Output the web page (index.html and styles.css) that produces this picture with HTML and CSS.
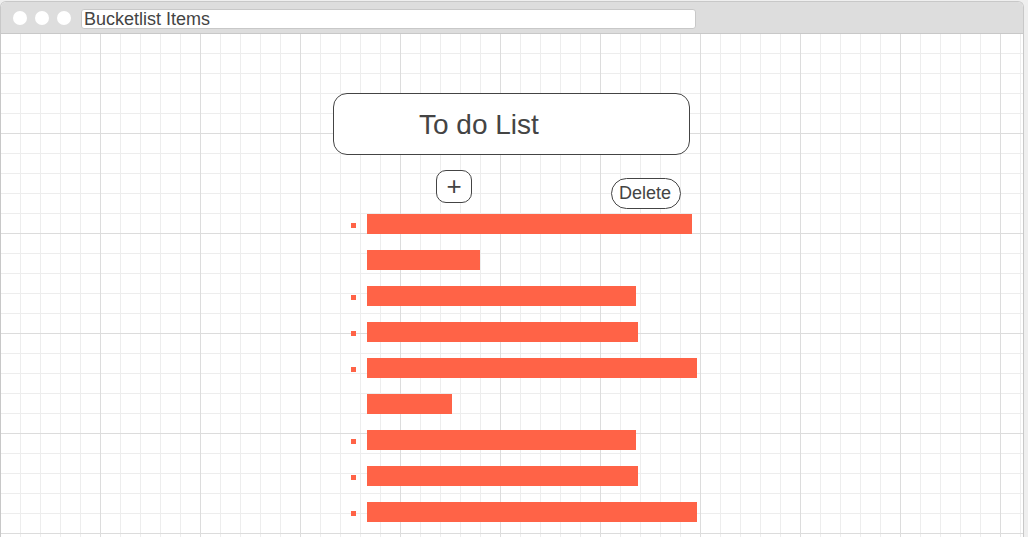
FILE: index.html
```html
<!DOCTYPE html>
<html>
<head>
<meta charset="utf-8">
<title>Bucketlist Items</title>
<link rel="stylesheet" href="styles.css">
</head>
<body>
<div class="window">
  <div class="titlebar">
    <span class="dot"></span>
    <span class="dot"></span>
    <span class="dot"></span>
    <div class="address">Bucketlist Items</div>
  </div>
  <div class="content">
    <div class="column">
      <div class="todo-title">To do List</div>
      <div class="actions">
        <button class="add-btn">+</button>
        <button class="delete-btn">Delete</button>
      </div>
      <ul class="items">
        <li class="item"><span class="bar" style="width:325px"></span></li>
        <li class="item nobullet"><span class="bar" style="width:113px"></span></li>
        <li class="item"><span class="bar" style="width:269px"></span></li>
        <li class="item"><span class="bar" style="width:271px"></span></li>
        <li class="item"><span class="bar" style="width:330px"></span></li>
        <li class="item nobullet"><span class="bar" style="width:85px"></span></li>
        <li class="item"><span class="bar" style="width:269px"></span></li>
        <li class="item"><span class="bar" style="width:271px"></span></li>
        <li class="item"><span class="bar" style="width:330px"></span></li>
      </ul>
    </div>
  </div>
</div>
</body>
</html>
```

FILE: styles.css
```css
html, body {
  margin: 0;
  padding: 0;
}
body {
  background: #efefef;
  font-family: "Liberation Sans", Arial, sans-serif;
  color: #444;
  overflow: hidden;
}
.window {
  box-sizing: border-box;
  width: 1024px;
  height: 536px;
  margin-top: 1px;
  border: 1px solid #c8c8c8;
  border-bottom: none;
  border-radius: 6px 6px 0 0;
  overflow: hidden;
  background: #fff;
  display: flex;
  flex-direction: column;
}
.titlebar {
  height: 31px;
  flex: none;
  background: #dddddd;
  border-bottom: 1px solid #c8c8c8;
  display: flex;
  align-items: center;
  padding-left: 12px;
}
.dot {
  width: 14px;
  height: 14px;
  border-radius: 50%;
  background: #fff;
  margin-right: 8px;
  flex: none;
}
.dot:nth-child(3) {
  margin-right: 10px;
}
.address {
  box-sizing: border-box;
  width: 615px;
  height: 20px;
  background: #fff;
  border: 1px solid #c8c8c8;
  border-radius: 3px;
  font-size: 18px;
  line-height: 18px;
  padding-left: 2px;
  color: #444;
  margin-top: 2px;
}
.content {
  flex: 1;
  background-color: #fff;
  background-image:
    linear-gradient(to right, #dcdcdc 1px, transparent 1px),
    linear-gradient(to bottom, #dcdcdc 1px, transparent 1px),
    linear-gradient(to right, #ededed 1px, transparent 1px),
    linear-gradient(to bottom, #ededed 1px, transparent 1px);
  background-size: 100px 100px, 100px 100px, 20px 20px, 20px 20px;
  background-position: -1px -1px, -1px -1px, -1px -1px, -1px -1px;
}
.column {
  width: 357px;
  margin-left: 332px;
  padding-top: 59px;
}
.todo-title {
  box-sizing: border-box;
  height: 62px;
  border: 1px solid #444;
  border-radius: 14px;
  background: #fff;
  font-size: 28px;
  line-height: 60px;
  padding-top: 1px;
  padding-left: 85px;
  color: #444;
}
.actions {
  display: flex;
  align-items: flex-start;
  margin-top: 15px;
}
.add-btn, .delete-btn {
  font-family: "Liberation Sans", Arial, sans-serif;
  color: #444;
  background: #fff;
  border: 1px solid #444;
  padding: 0;
  margin: 0;
  box-sizing: border-box;
}
.add-btn {
  width: 36px;
  height: 33px;
  border-radius: 10px;
  margin-left: 103px;
  font-size: 26px;
  line-height: 29px;
}
.delete-btn {
  width: 70px;
  height: 31px;
  border-radius: 16px;
  margin-left: 139px;
  margin-top: 8px;
  font-size: 18px;
  line-height: 29px;
  padding-right: 2px;
}
.items {
  list-style: none;
  margin: 5px 0 0 0;
  padding: 0;
}
.item {
  display: flex;
  align-items: center;
  height: 20px;
  margin-bottom: 16px;
}
.item::before {
  content: "";
  width: 5px;
  height: 5px;
  background: #ff6347;
  margin-left: 18px;
  margin-right: 11px;
  margin-top: 2px;
  flex: none;
}
.item.nobullet::before {
  visibility: hidden;
}
.bar {
  display: block;
  height: 20px;
  background: #ff6347;
  flex: none;
}
```
